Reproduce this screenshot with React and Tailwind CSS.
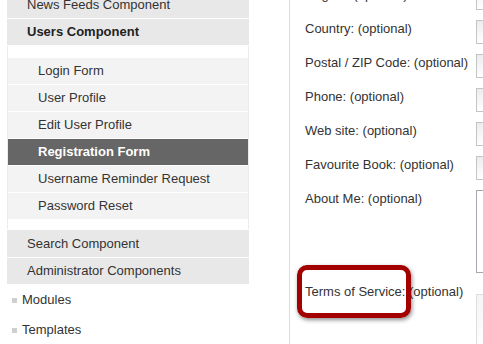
import React from 'react'

const subItems = [
  { label: 'Login Form' },
  { label: 'User Profile' },
  { label: 'Edit User Profile' },
  { label: 'Registration Form', active: true },
  { label: 'Username Reminder Request' },
  { label: 'Password Reset' },
]

const fields = [
  'Region: (optional)',
  'Country: (optional)',
  'Postal / ZIP Code: (optional)',
  'Phone: (optional)',
  'Web site: (optional)',
  'Favourite Book: (optional)',
]

function Input() {
  return <div className="w-[40px] h-[24px] shrink-0 border border-[#c4c4c4] bg-gradient-to-b from-[#ececec] to-white" />
}

export default function App() {
  return (
    <div className="relative w-[483px] h-[344px] overflow-hidden bg-white flex text-[13px] leading-[16px] text-[#333]" style={{ fontFamily: '"Liberation Sans", Arial, sans-serif' }}>
      {/* sidebar menu */}
      <div className="w-[289px] shrink-0 pl-[7px] pr-[40px]">
        <div className="flex flex-col gap-px -mt-[8px]">
          <div className="h-[26px] bg-[#e8e8e8] px-[20px] flex items-center">News Feeds Component</div>
          <div className="h-[26px] bg-[#e8e8e8] px-[20px] flex items-center font-bold text-[#222]">Users Component</div>
          <div className="border-x border-[#ececec] bg-white pt-[12px] pb-[10px]">
            <div className="flex flex-col gap-px">
              {subItems.map((it) => (
                <div
                  key={it.label}
                  className={`h-[26px] px-[30px] flex items-center ${it.active ? 'bg-[#666] text-white font-bold' : 'bg-[#f3f3f3]'}`}
                >
                  {it.label}
                </div>
              ))}
            </div>
          </div>
          <div className="h-[27px] bg-[#e8e8e8] px-[20px] flex items-center">Search Component</div>
          <div className="h-[26px] bg-[#e8e8e8] px-[20px] flex items-center">Administrator Components</div>
        </div>
        <div className="flex flex-col gap-[14px] mt-[8px] ml-[5px]">
          {['Modules', 'Templates'].map((t) => (
            <div key={t} className="h-[16px] flex items-center gap-[5px]">
              <span className="w-[5px] h-[5px] bg-[#cfcfcf]" />
              <span>{t}</span>
            </div>
          ))}
        </div>
      </div>

      {/* form */}
      <div className="flex-1 border-l border-[#dcdcdc] pl-[15px]">
        <div className="flex flex-col gap-[10px] -mt-[14px]">
          {fields.map((f) => (
            <div key={f} className="flex items-start">
              <div className="w-[171px] shrink-0 pt-[1px] whitespace-nowrap">{f}</div>
              <Input />
            </div>
          ))}
          <div className="flex items-start">
            <div className="w-[171px] shrink-0 pt-[1px]">About Me: (optional)</div>
            <div className="w-[40px] h-[83px] shrink-0 border border-[#a6a6ae] bg-white" />
          </div>
          <div className="flex items-start mt-[11px]">
            <div className="w-[171px] shrink-0 -mt-[10px] whitespace-nowrap">Terms of Service: (optional)</div>
            <div className="w-[40px] h-[60px] shrink-0 border border-[#dedede] bg-gradient-to-b from-[#f4f4f4] to-white" />
          </div>
        </div>
      </div>

      {/* annotation highlight */}
      <div className="absolute left-[297px] top-[265px] w-[114px] h-[53px] rounded-[10px] border-[5px] border-[#a30000] shadow-[1px_2px_4px_rgba(0,0,0,0.45)]" />
    </div>
  )
}
